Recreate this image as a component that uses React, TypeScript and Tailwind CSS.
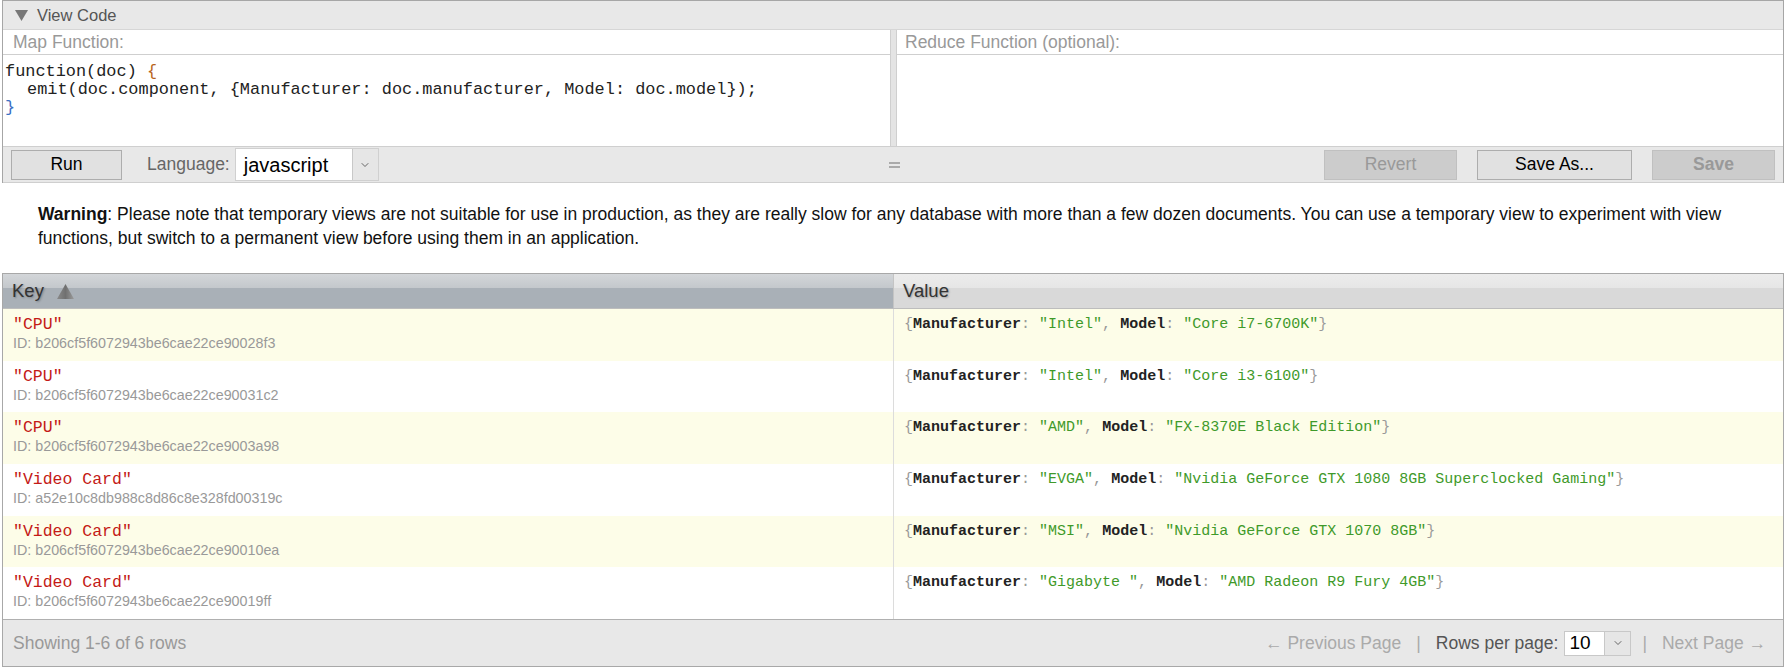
import React from "react";
import { ChevronDown } from "lucide-react";

const rows = [
  { key: "CPU", id: "b206cf5f6072943be6cae22ce90028f3", man: "Intel", model: "Core i7-6700K" },
  { key: "CPU", id: "b206cf5f6072943be6cae22ce90031c2", man: "Intel", model: "Core i3-6100" },
  { key: "CPU", id: "b206cf5f6072943be6cae22ce9003a98", man: "AMD", model: "FX-8370E Black Edition" },
  { key: "Video Card", id: "a52e10c8db988c8d86c8e328fd00319c", man: "EVGA", model: "Nvidia GeForce GTX 1080 8GB Superclocked Gaming" },
  { key: "Video Card", id: "b206cf5f6072943be6cae22ce90010ea", man: "MSI", model: "Nvidia GeForce GTX 1070 8GB" },
  { key: "Video Card", id: "b206cf5f6072943be6cae22ce90019ff", man: "Gigabyte ", model: "AMD Radeon R9 Fury 4GB" },
];

function Arrow() {
  return (
    <div className="w-[26px] self-stretch bg-[#e6e6e6] border-l border-[#c8c8c8] flex items-center justify-center">
      <ChevronDown size={12} strokeWidth={1.6} color="#444" />
    </div>
  );
}

export default function App() {
  return (
    <div className="w-[1788px] h-[667px] bg-white pl-[2px] pr-[4px] font-['Liberation_Sans',Arial,sans-serif] text-[17.5px] overflow-hidden">
      {/* View Code panel */}
      <div className="border-l border-r border-t border-[#a6a6a6]">
        <div className="h-[29px] bg-[#e8e8e8] flex items-center pl-[12px] text-[#555] text-[16.5px] border-b border-[#d6d6d6]">
          <svg width="13" height="11" viewBox="0 0 13 11" className="mr-[9px]">
            <path d="M0 0 L13 0 L6.5 11 Z" fill="#777" />
          </svg>
          <span>View Code</span>
        </div>
        <div className="flex">
          <div className="w-[887px] flex flex-col">
            <div className="h-[25px] flex items-center pl-[10px] text-[#999] border-b border-[#cfcfcf]">Map Function:</div>
            <div className="h-[91px] pt-[8px] pl-[2px] font-['Liberation_Mono','Courier_New',monospace] text-[16.9px] leading-[18px] text-[#222] whitespace-pre">
              <div>function(doc) <span className="text-[#b8651b]">{"{"}</span></div>
              <div className="pl-[22px]">{"emit(doc.component, {Manufacturer: doc.manufacturer, Model: doc.model});"}</div>
              <div className="text-[#3a6fc4]">{"}"}</div>
            </div>
          </div>
          <div className="w-[7px] bg-[#e4e4e4] border-l border-r border-[#cfcfcf]" />
          <div className="flex-1 flex flex-col">
            <div className="h-[25px] flex items-center pl-[8px] text-[#999] border-b border-[#cfcfcf]">Reduce Function (optional):</div>
            <div className="h-[91px]" />
          </div>
        </div>
        <div className="relative h-[37px] bg-[#e8e8e8] border-t border-b border-[#cfcfcf] flex items-center pl-[8px] pr-[8px]">
          <button className="w-[111px] h-[30px] bg-[#e1e1e1] border border-[#adadad] text-black">Run</button>
          <span className="ml-[25px] text-[#666]">Language:</span>
          <div className="ml-[5px] w-[144px] h-[33px] bg-white border border-[#d0d0d0] flex items-stretch">
            <span className="flex-1 pl-[8px] flex items-center text-[20px] text-black">javascript</span>
            <Arrow />
          </div>
          <div className="absolute left-[886px] top-[15px] w-[11px] h-[6px] border-t-2 border-b-2 border-[#aaaaaa]" />
          <div className="ml-auto flex gap-[20px]">
            <button className="w-[133px] h-[30px] bg-[#cccccc] border border-[#c0c0c0] text-[#999]">Revert</button>
            <button className="w-[155px] h-[30px] bg-[#e1e1e1] border border-[#adadad] text-black">Save As...</button>
            <button className="w-[123px] h-[30px] bg-[#cccccc] border border-[#c0c0c0] text-[#999] font-bold">Save</button>
          </div>
        </div>
      </div>

      {/* Warning */}
      <p className="mt-[19px] pl-[36px] pr-[40px] text-[17.5px] leading-[24px] text-[#111]">
        <b>Warning</b>: Please note that temporary views are not suitable for use in production, as they are really slow for any database with more than a few dozen documents. You can use a temporary view to experiment with view functions, but switch to a permanent view before using them in an application.
      </p>

      {/* Table */}
      <div className="mt-[23px] border border-[#a8a8a8]">
        <div className="flex h-[35px] border-b border-[#bdbdbd]">
          <div className="w-[890px] flex items-center pl-[9px] text-[18.5px] text-[#333] bg-[linear-gradient(to_bottom,#d3d6d9_0%,#c4c8cc_40%,#a9b0b7_41%,#a9b0b7_100%)] [text-shadow:1px_1px_2px_rgba(0,0,0,0.25)]">
            Key
            <svg width="17" height="15" viewBox="0 0 17 15" className="ml-[13px]">
              <defs>
                <linearGradient id="tg" x1="0" y1="0" x2="1" y2="0">
                  <stop offset="0" stopColor="#8a8a8a" />
                  <stop offset="0.5" stopColor="#707070" />
                  <stop offset="1" stopColor="#9a9a9a" />
                </linearGradient>
              </defs>
              <path d="M8.5 0 L17 15 L0 15 Z" fill="url(#tg)" />
            </svg>
          </div>
          <div className="flex-1 flex items-center pl-[9px] text-[18.5px] text-[#333] border-l border-[#c4c4c4] bg-[linear-gradient(to_bottom,#ececec_0%,#e6e6e6_40%,#d9d9d9_41%,#d9d9d9_100%)] [text-shadow:1px_1px_2px_rgba(0,0,0,0.25)]">
            Value
          </div>
        </div>
        {rows.map((r, i) => (
          <div key={i} className={`flex h-[51.7px] ${i % 2 === 0 ? "bg-[#fdfde8]" : "bg-white"}`}>
            <div className="w-[890px] pl-[10px] pt-[7px]">
              <div className="font-['Liberation_Mono','Courier_New',monospace] text-[16.5px] leading-[18px] text-[#c41a16] whitespace-pre">"{r.key}"</div>
              <div className="text-[14.3px] leading-[18px] text-[#999]">ID: {r.id}</div>
            </div>
            <div className="flex-1 border-l border-[#dcdcdc] pl-[10px] pt-[7px] font-['Liberation_Mono','Courier_New',monospace] text-[15px] leading-[18px] whitespace-pre">
              <span className="text-[#999]">{"{"}</span>
              <span className="font-bold text-[#222]">Manufacturer</span>
              <span className="text-[#999]">: </span>
              <span className="text-[#3f9a2a]">"{r.man}"</span>
              <span className="text-[#999]">, </span>
              <span className="font-bold text-[#222]">Model</span>
              <span className="text-[#999]">: </span>
              <span className="text-[#3f9a2a]">"{r.model}"</span>
              <span className="text-[#999]">{"}"}</span>
            </div>
          </div>
        ))}
        <div className="h-[47px] bg-[#e8e8e8] border-t border-[#b0b0b0] flex items-center pl-[10px] pr-[17px]">
          <span className="text-[#999]">Showing 1-6 of 6 rows</span>
          <div className="ml-auto flex items-center">
            <span className="text-[#aaa]">← Previous Page</span>
            <span className="text-[#aaa] mx-[15px]">|</span>
            <span className="text-[#555]">Rows per page:</span>
            <div className="ml-[6px] w-[67px] h-[25px] bg-white border border-[#c8c8c8] flex items-stretch">
              <span className="flex-1 pl-[4px] flex items-center text-[19px] text-black">10</span>
              <Arrow />
            </div>
            <span className="text-[#aaa] ml-[11px] mr-[15px]">|</span>
            <span className="text-[#aaa]">Next Page →</span>
          </div>
        </div>
      </div>
    </div>
  );
}
